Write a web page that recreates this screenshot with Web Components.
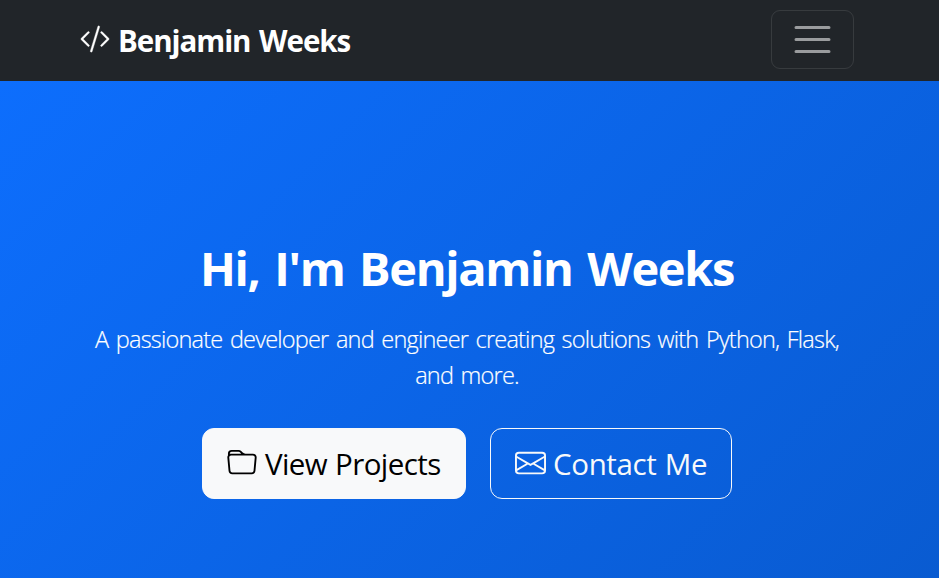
<!DOCTYPE html>
<html lang="en">
<head>
    <meta charset="utf-8">
    <title>Benjamin Weeks</title>
    <style>
        body {
            margin: 0;
            font-family: "Open Sans", "Noto Sans", sans-serif;
            font-size: 23.5px;
            line-height: 1.5;
            color: #fff;
        }
    </style>
</head>
<body>
    <site-navbar><bi-icon slot="icon" name="code-slash"></bi-icon>Benjamin Weeks</site-navbar>
    <site-hero>
        <span slot="title">Hi, I'm Benjamin Weeks</span>
        <span slot="lead">A passionate developer and engineer creating solutions with Python, Flask, and more.</span>
        <hero-button variant="light"><bi-icon slot="icon" name="folder"></bi-icon>View Projects</hero-button>
        <hero-button variant="outline"><bi-icon slot="icon" name="envelope"></bi-icon>Contact Me</hero-button>
    </site-hero>

    <template id="navbar">
        <style>
            :host {
                display: flex;
                align-items: center;
                justify-content: space-between;
                box-sizing: border-box;
                height: 81px;
                padding: 0 85px 2px 80px;
                background: #212529;
                --icon-width: 30px;
            }
            .brand {
                display: flex;
                align-items: center;
                gap: 8px;
                font-size: 29.5px;
                font-weight: 700;
                line-height: 45px;
                letter-spacing: -1.05px;
                word-spacing: 2px;
                white-space: nowrap;
            }
            .brand span { padding-top: 2px; }
            .brand slot[name=icon]::slotted(*) { margin-bottom: 1px; }
            button {
                display: flex;
                align-items: center;
                justify-content: center;
                box-sizing: border-box;
                width: 83px;
                height: 59px;
                padding: 0;
                background: transparent;
                border: 1px solid rgba(255, 255, 255, .1);
                border-radius: 9px;
            }
            svg { display: block; width: 45px; height: 45px; }
        </style>
        <div class="brand"><slot name="icon"></slot><span><slot></slot></span></div>
        <button aria-label="Toggle navigation">
            <svg viewBox="0 0 30 30"><path stroke="rgba(255,255,255,.55)" stroke-linecap="round" stroke-miterlimit="10" stroke-width="2" d="M4 7h22M4 15h22M4 23h22"/></svg>
        </button>
    </template>

    <template id="hero">
        <style>
            :host {
                display: flex;
                flex-direction: column;
                align-items: center;
                box-sizing: border-box;
                height: calc(100vh - 81px);
                padding: 158px 79px 0 74px;
                background: linear-gradient(135deg, #0d6efd, #095bd1);
                text-align: center;
            }
            h1 {
                margin: 0 0 24px;
                font-size: 47px;
                font-weight: 700;
                line-height: 58px;
                letter-spacing: -1.35px;
                word-spacing: 3.8px;
                white-space: nowrap;
            }
            p {
                margin: 0 0 35px;
                font-weight: 300;
                line-height: 36px;
                letter-spacing: -0.8px;
                word-spacing: 2.2px;
                -webkit-text-stroke: 0.2px currentColor;
            }
            .actions { display: flex; gap: 24px; }
        </style>
        <h1><slot name="title"></slot></h1>
        <p><slot name="lead"></slot></p>
        <div class="actions"><slot></slot></div>
    </template>

    <template id="button">
        <style>
            :host {
                display: flex;
                align-items: center;
                gap: 7px;
                box-sizing: border-box;
                width: 264px;
                height: 71px;
                padding: 0 0 1px 24px;
                border: 1px solid #f8f9fa;
                border-radius: 12px;
                font-size: 29.5px;
                line-height: 45px;
                letter-spacing: -0.6px;
                word-spacing: 1px;
                white-space: nowrap;
                cursor: pointer;
            }
            :host([variant=light]) { background: #f8f9fa; color: #000; --icon-width: 30px; gap: 8px; }
            :host([variant=outline]) { width: 242px; color: #f8f9fa; letter-spacing: -0.35px; }
        </style>
        <slot name="icon"></slot><span><slot></slot></span>
    </template>

    <script>
        const icons = {
            'code-slash': '<path d="M10.478 1.647a.5.5 0 1 0-.956-.294l-4 13a.5.5 0 0 0 .956.294zM4.854 4.146a.5.5 0 0 1 0 .708L1.707 8l3.147 3.146a.5.5 0 0 1-.708.708l-3.5-3.5a.5.5 0 0 1 0-.708l3.5-3.5a.5.5 0 0 1 .708 0m6.292 0a.5.5 0 0 0 0 .708L14.293 8l-3.147 3.146a.5.5 0 0 0 .708.708l3.5-3.5a.5.5 0 0 0 0-.708l-3.5-3.5a.5.5 0 0 0-.708 0" stroke="currentColor" stroke-width=".2"/>',
            'folder': '<path d="M.54 3.87.5 3a2 2 0 0 1 2-2h3.672a2 2 0 0 1 1.414.586l.828.828A2 2 0 0 0 9.828 3h3.982a2 2 0 0 1 1.992 2.181l-.637 7A2 2 0 0 1 13.174 14H2.826a2 2 0 0 1-1.991-1.819l-.637-7a2 2 0 0 1 .342-1.31zM2.19 4a1 1 0 0 0-.996 1.09l.637 7a1 1 0 0 0 .995.91h10.348a1 1 0 0 0 .995-.91l.637-7A1 1 0 0 0 13.81 4zm4.69-1.707A1 1 0 0 0 6.172 2H2.5a1 1 0 0 0-1 .981l.006.139q.323-.119.684-.12h5.396z"/>',
            'envelope': '<path d="M0 4a2 2 0 0 1 2-2h12a2 2 0 0 1 2 2v8a2 2 0 0 1-2 2H2a2 2 0 0 1-2-2zm2-1a1 1 0 0 0-1 1v.217l7 4.2 7-4.2V4a1 1 0 0 0-1-1zm13 2.383-4.708 2.825L15 11.105zm-.034 6.876-5.64-3.471L8 9.583l-1.326-.795-5.64 3.47A1 1 0 0 0 2 13h12a1 1 0 0 0 .966-.741M1 11.105l4.708-2.897L1 5.383z"/>'
        }

        class BiIcon extends HTMLElement {
            constructor() {
                super()
                this.attachShadow({ mode: 'open' })
            }

            connectedCallback() {
                this.shadowRoot.innerHTML = `
                    <style>
                        :host { display: block; flex: none; }
                        svg { display: block; width: var(--icon-width, 31px); height: 30px; fill: currentColor; }
                    </style>
                    <svg viewBox="0 0 16 16" preserveAspectRatio="none" aria-hidden="true">${icons[this.getAttribute('name')]}</svg>`
            }
        }

        class TemplateElement extends HTMLElement {
            constructor() {
                super()
                const template = document.getElementById(this.constructor.template)
                this.attachShadow({ mode: 'open' }).appendChild(template.content.cloneNode(true))
            }
        }

        class SiteNavbar extends TemplateElement {
            static template = 'navbar'
        }

        class SiteHero extends TemplateElement {
            static template = 'hero'
        }

        class HeroButton extends TemplateElement {
            static template = 'button'
        }

        customElements.define('bi-icon', BiIcon)
        customElements.define('site-navbar', SiteNavbar)
        customElements.define('site-hero', SiteHero)
        customElements.define('hero-button', HeroButton)
    </script>
</body>
</html>
